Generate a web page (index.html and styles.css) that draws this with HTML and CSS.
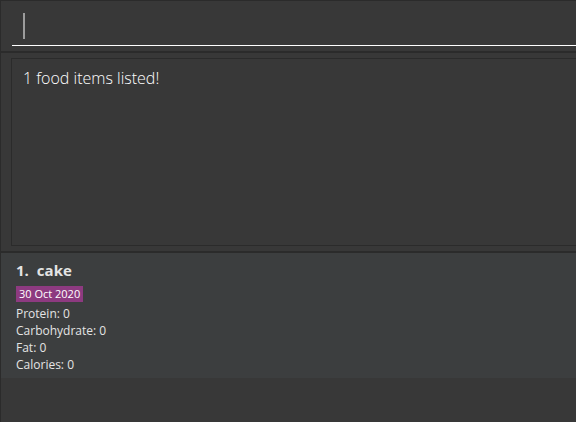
FILE: index.html
```html
<!DOCTYPE html>
<html>
<head>
<meta charset="utf-8">
<link rel="stylesheet" href="styles.css">
</head>
<body>
<div class="app">
  <div class="command-pane">
    <div class="command-field"><span class="caret"></span></div>
  </div>
  <div class="divider"></div>
  <div class="result-pane">
    <div class="result-box">1 food items listed!</div>
  </div>
  <div class="divider"></div>
  <div class="list">
    <div class="card">
      <div class="title"><span class="index">1.</span><span class="name">cake</span></div>
      <div class="tags"><span class="tag">30 Oct 2020</span></div>
      <div class="field">Protein: 0</div>
      <div class="field">Carbohydrate: 0</div>
      <div class="field">Fat: 0</div>
      <div class="field">Calories: 0</div>
    </div>
  </div>
</div>
</body>
</html>
```
FILE: styles.css
```css
html, body {
  margin: 0;
  padding: 0;
  background: #383838;
  width: 576px;
  height: 422px;
  overflow: hidden;
  font-family: "Open Sans", "Noto Sans", sans-serif;
}
.app {
  box-sizing: border-box;
  height: 422px;
  border-left: 1px solid #2b2b2b;
  border-top: 1px solid #2b2b2b;
  display: flex;
  flex-direction: column;
}
.command-pane {
  box-sizing: border-box;
  height: 50px;
  padding: 5px 0 0 11px;
}
.command-field {
  box-sizing: border-box;
  height: 40px;
  border-bottom: 1px solid #ffffff;
  display: flex;
  align-items: flex-start;
}
.caret {
  width: 2px;
  height: 26px;
  margin: 7px 0 0 11px;
  background: #9c9c9c;
}
.divider {
  height: 2px;
  background: #2b2b2b;
  flex: none;
}
.result-pane {
  box-sizing: border-box;
  height: 198px;
  padding: 5px 0 5px 10px;
}
.result-box {
  box-sizing: border-box;
  height: 188px;
  border: 1px solid #2b2b2b;
  border-right: none;
  padding: 7px 0 0 11px;
  color: #ffffff;
  font-size: 16px;
  font-weight: 300;
  line-height: 24px;
}
.list {
  flex: 1;
}
.card {
  box-sizing: border-box;
  height: 125px;
  background: #3c3e3f;
  padding: 7px 0 0 15px;
  color: #e4e4e4;
}
.title {
  font-size: 15px;
  font-weight: 700;
  line-height: 20px;
  display: flex;
  gap: 8px;
}
.tags {
  display: flex;
  margin-top: 6px;
}
.tag {
  background: #8d3a80;
  color: #ffffff;
  font-size: 11px;
  line-height: 16px;
  padding: 0 3px;
}
.field {
  font-size: 12px;
  line-height: 17px;
}
.tags + .field {
  margin-top: 3px;
}
```
